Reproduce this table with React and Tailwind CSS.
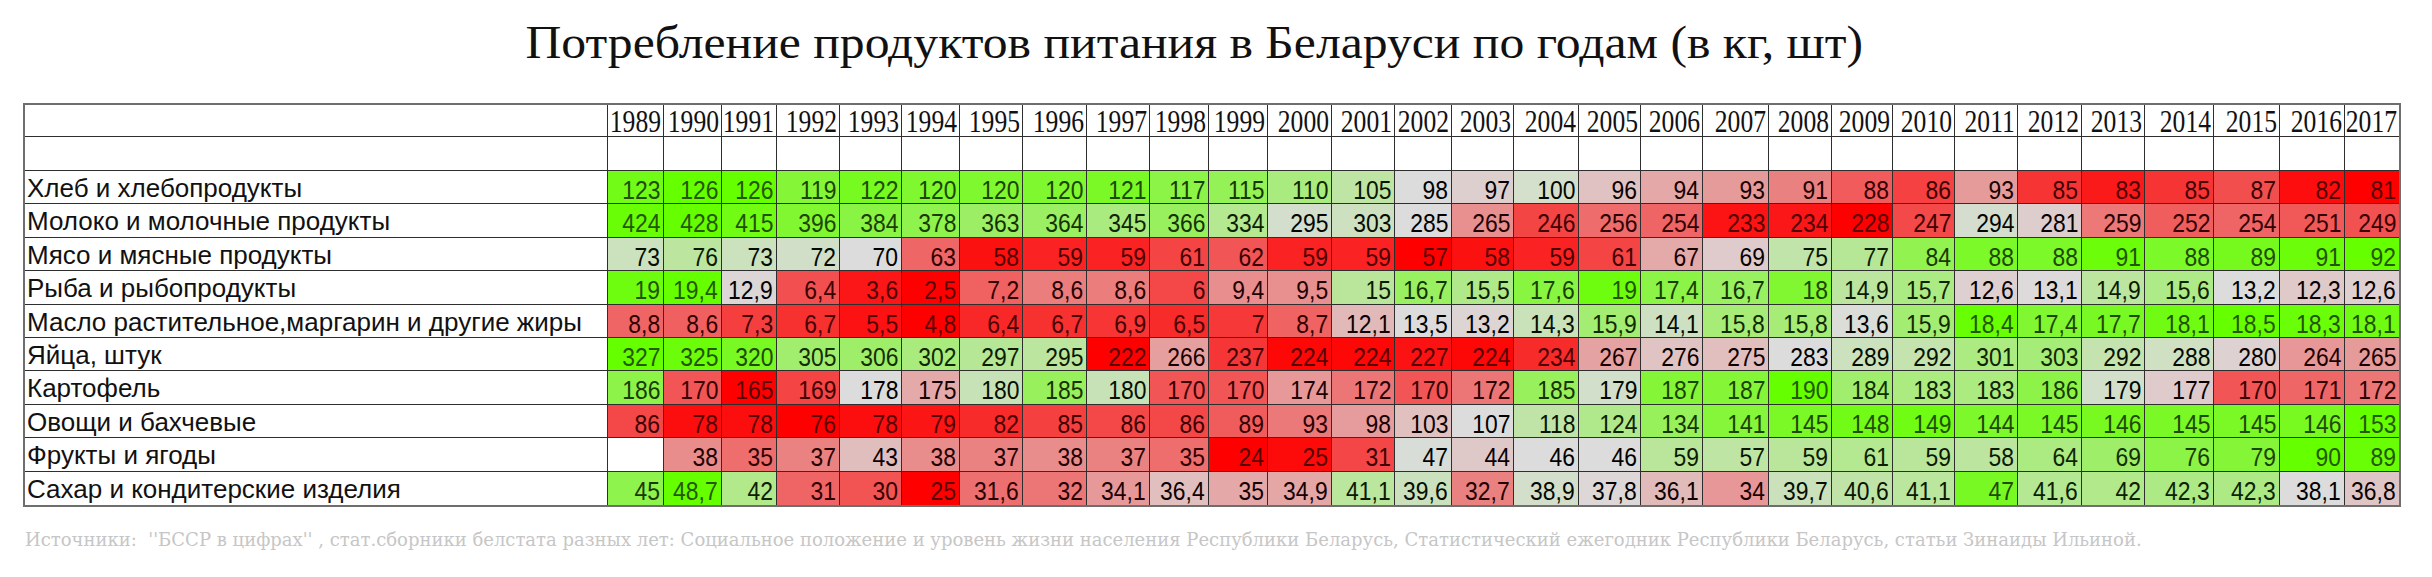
import clsx from 'clsx';

const YEARS = [
  1989, 1990, 1991, 1992, 1993, 1994, 1995, 1996, 1997, 1998, 1999, 2000, 2001, 2002, 2003,
  2004, 2005, 2006, 2007, 2008, 2009, 2010, 2011, 2012, 2013, 2014, 2015, 2016, 2017,
];

// values as printed in the table (comma is the decimal mark)
const ROWS = [
  ['Хлеб и хлебопродукты', '123 126 126 119 122 120 120 120 121 117 115 110 105 98 97 100 96 94 93 91 88 86 93 85 83 85 87 82 81'],
  ['Молоко и молочные продукты', '424 428 415 396 384 378 363 364 345 366 334 295 303 285 265 246 256 254 233 234 228 247 294 281 259 252 254 251 249'],
  ['Мясо и мясные продукты', '73 76 73 72 70 63 58 59 59 61 62 59 59 57 58 59 61 67 69 75 77 84 88 88 91 88 89 91 92'],
  ['Рыба и рыбопродукты', '19 19,4 12,9 6,4 3,6 2,5 7,2 8,6 8,6 6 9,4 9,5 15 16,7 15,5 17,6 19 17,4 16,7 18 14,9 15,7 12,6 13,1 14,9 15,6 13,2 12,3 12,6'],
  ['Масло растительное,маргарин и другие жиры', '8,8 8,6 7,3 6,7 5,5 4,8 6,4 6,7 6,9 6,5 7 8,7 12,1 13,5 13,2 14,3 15,9 14,1 15,8 15,8 13,6 15,9 18,4 17,4 17,7 18,1 18,5 18,3 18,1'],
  ['Яйца, штук', '327 325 320 305 306 302 297 295 222 266 237 224 224 227 224 234 267 276 275 283 289 292 301 303 292 288 280 264 265'],
  ['Картофель', '186 170 165 169 178 175 180 185 180 170 170 174 172 170 172 185 179 187 187 190 184 183 183 186 179 177 170 171 172'],
  ['Овощи и бахчевые', '86 78 78 76 78 79 82 85 86 86 89 93 98 103 107 118 124 134 141 145 148 149 144 145 146 145 145 146 153'],
  ['Фрукты и ягоды', '- 38 35 37 43 38 37 38 37 35 24 25 31 47 44 46 46 59 57 59 61 59 58 64 69 76 79 90 89'],
  ['Сахар и кондитерские изделия', '45 48,7 42 31 30 25 31,6 32 34,1 36,4 35 34,9 41,1 39,6 32,7 38,9 37,8 36,1 34 39,7 40,6 41,1 47 41,6 42 42,3 42,3 38,1 36,8'],
];

const RED = [255, 0, 0];
const MID = [220, 220, 220];
const GREEN = [102, 255, 0];

const mix = (a, b, t) => a.map((v, i) => Math.round(v + (b[i] - v) * t));

const median = (nums) => {
  const s = [...nums].sort((a, b) => a - b);
  const m = Math.floor(s.length / 2);
  return s.length % 2 ? s[m] : (s[m - 1] + s[m]) / 2;
};

// three colour scale per row: min red, median grey, max green
const scaleRow = (cells) => {
  const nums = cells.filter((c) => c !== '-').map((c) => parseFloat(c.replace(',', '.')));
  const min = Math.min(...nums);
  const max = Math.max(...nums);
  const med = median(nums);
  return cells.map((c) => {
    if (c === '-') return null;
    const v = parseFloat(c.replace(',', '.'));
    const rgb = v <= med ? mix(MID, RED, med === min ? 0 : (med - v) / (med - min)) : mix(MID, GREEN, (v - med) / (max - med));
    const low = Math.min(...rgb);
    const ink = rgb.map((x) => Math.round((x - low) * 0.35));
    return { bg: `rgb(${rgb.join(',')})`, fg: `rgb(${ink.join(',')})` };
  });
};

const edge = (col, row) => clsx('border-[#2e2e2e]', col < 29 && 'border-r', row < 11 && 'border-b');

const App = () => {
  return (
    <div className="w-[2432px] h-[577px] bg-white overflow-hidden font-['Liberation_Sans',sans-serif] text-[#111]">
      <h1 className="w-[2388px] h-[103px] pt-[17px] text-center font-['Liberation_Serif',serif] text-[46px] leading-[52px] font-normal">
        <span className="inline-block scale-x-[1.08]">Потребление продуктов питания в Беларуси по годам (в кг, шт)</span>
      </h1>

      <div className="ml-[23px] w-[2378px] grid grid-cols-[583px_56px_58px_55px_63px_62px_58px_63px_64px_63px_59px_59px_64px_63px_57px_62px_65px_62px_62px_66px_63px_61px_62px_63px_64px_63px_69px_66px_65px_54px] grid-rows-[32px_34px_repeat(10,33.4px)] border-2 border-[#6e6e6e]">
        <div className={edge(0, 0)} />
        {YEARS.map((y, i) => (
          <div key={y} className={clsx(edge(i + 1, 0), 'flex justify-end items-start pr-[2px] overflow-visible')}>
            <span className="shrink-0 inline-block origin-right scale-x-[0.8] font-['Liberation_Serif',serif] text-[32px] leading-[33px]">
              {y}
            </span>
          </div>
        ))}

        {Array.from({ length: 30 }).map((_, i) => (
          <div key={`blank-${i}`} className={edge(i, 1)} />
        ))}

        {ROWS.map(([label, values], r) => {
          const cells = values.split(' ');
          const colors = scaleRow(cells);
          return [
            <div key={`l-${r}`} className={clsx(edge(0, r + 2), 'pl-[2px] whitespace-nowrap text-[26px] leading-[35px]')}>
              {label}
            </div>,
            ...cells.map((c, i) => (
              <div
                key={`${r}-${i}`}
                className={clsx(edge(i + 1, r + 2), 'flex justify-end items-start pr-[3px]')}
                style={colors[i] ? { backgroundColor: colors[i].bg, color: colors[i].fg } : undefined}
              >
                {c !== '-' && (
                  <span className="shrink-0 inline-block origin-right scale-x-[0.88] text-[26px] leading-[38px]">{c}</span>
                )}
              </div>
            )),
          ];
        })}
      </div>

      <p className="ml-[25px] mt-[21px] whitespace-pre font-['DejaVu_Serif',serif] text-[18px] leading-[24px] text-[#c6c6c6]">
        Источники:  ''БССР в цифрах'' , стат.сборники белстата разных лет: Социальное положение и уровень жизни населения Республики Беларусь, Статистический ежегодник Республики Беларусь, статьи Зинаиды Ильиной.
      </p>
    </div>
  );
};

export default App;
